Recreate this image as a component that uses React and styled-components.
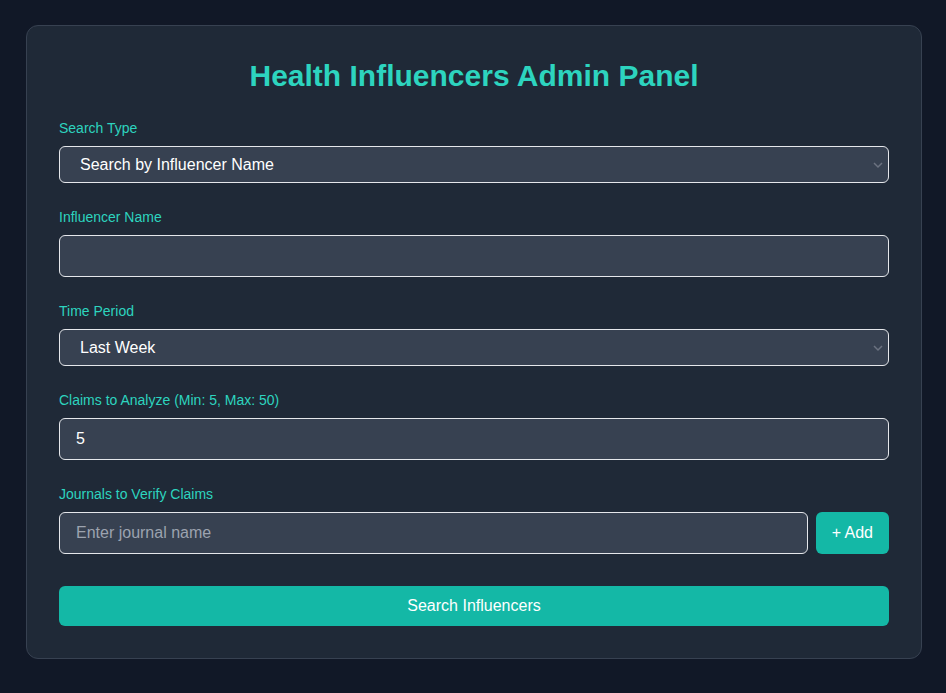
import styled, { createGlobalStyle } from 'styled-components';

const GlobalStyle = createGlobalStyle`
  * { box-sizing: border-box; }
  html, body {
    margin: 0;
    background: #111827;
    font-family: 'Liberation Sans', Arial, sans-serif;
  }
`;

const Page = styled.div`
  min-height: 693px;
  padding: 25px 24px 25px 26px;
  background: #111827;
`;

const Card = styled.div`
  max-width: 896px;
  margin: 0 auto;
  padding: 32px;
  background: #1f2937;
  border: 1px solid #374151;
  border-radius: 12px;
`;

const Title = styled.h1`
  margin: 0 0 24px;
  font-size: 30px;
  line-height: 36px;
  font-weight: 700;
  color: #2dd4bf;
  text-align: center;
`;

const Form = styled.div`
  display: flex;
  flex-direction: column;
  gap: 24px;
`;

const Field = styled.div`
  display: flex;
  flex-direction: column;
`;

const Label = styled.label`
  margin-bottom: 8px;
  font-size: 14px;
  line-height: 20px;
  color: #2dd4bf;
`;

const SelectWrap = styled.div`
  position: relative;
`;

const Select = styled.select`
  width: 100%;
  height: 37px;
  padding: 0 30px 0 20px;
  appearance: none;
  background: #374151;
  color: #fff;
  border: 1px solid #e5e7eb;
  border-radius: 6px;
  font-family: inherit;
  font-size: 16px;
  outline: none;
`;

const Chevron = styled.svg`
  position: absolute;
  right: 4px;
  top: 50%;
  transform: translateY(-50%);
  pointer-events: none;
`;

const Input = styled.input`
  display: block;
  width: 100%;
  min-width: 0;
  height: 42px;
  padding: 8px 16px;
  background: #374151;
  color: #fff;
  border: 1px solid #e5e7eb;
  border-radius: 6px;
  font-family: inherit;
  font-size: 16px;
  outline: none;
  &::placeholder { color: #9ca3af; }
`;

const Row = styled.div`
  display: flex;
  gap: 8px;
  & > input { flex: 1; }
`;

const Button = styled.button`
  flex-shrink: 0;
  height: ${(p) => (p.$wide ? '40px' : '42px')};
  padding: 0 16px;
  width: ${(p) => (p.$wide ? '100%' : 'auto')};
  margin-top: ${(p) => (p.$wide ? '8px' : '0')};
  background: #14b8a6;
  color: #fff;
  border: none;
  border-radius: 6px;
  font-family: inherit;
  font-size: 16px;
  cursor: pointer;
`;

function Dropdown({ value, options }) {
  return (
    <SelectWrap>
      <Select defaultValue={value}>
        {options.map((o) => (
          <option key={o}>{o}</option>
        ))}
      </Select>
      <Chevron width='14' height='10' viewBox='0 0 14 10'>
        <path d='M3 3 L7 7 L11 3' fill='none' stroke='#6b7280' strokeWidth='1.5' />
      </Chevron>
    </SelectWrap>
  );
}

export default function App() {
  return (
    <Page>
      <GlobalStyle />
      <Card>
        <Title>Health Influencers Admin Panel</Title>
        <Form>
          <Field>
            <Label>Search Type</Label>
            <Dropdown
              value='Search by Influencer Name'
              options={['Search by Influencer Name', 'Discover New Influencers']}
            />
          </Field>
          <Field>
            <Label>Influencer Name</Label>
            <Input type='text' />
          </Field>
          <Field>
            <Label>Time Period</Label>
            <Dropdown value='Last Week' options={['Last Week', 'Last Month', 'Last Year', 'All Time']} />
          </Field>
          <Field>
            <Label>Claims to Analyze (Min: 5, Max: 50)</Label>
            <Input type='text' defaultValue='5' />
          </Field>
          <Field>
            <Label>Journals to Verify Claims</Label>
            <Row>
              <Input type='text' placeholder='Enter journal name' />
              <Button>+ Add</Button>
            </Row>
          </Field>
          <Button $wide>Search Influencers</Button>
        </Form>
      </Card>
    </Page>
  );
}
